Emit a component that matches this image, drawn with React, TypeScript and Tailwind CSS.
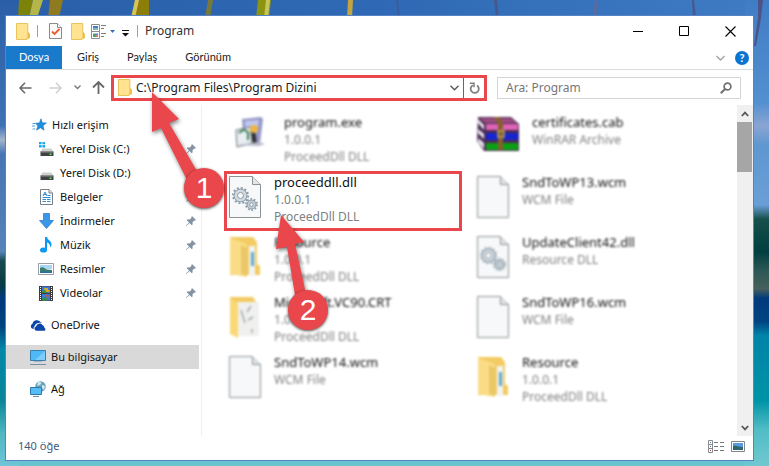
import React from 'react';

type IconName = 'exe' | 'rar' | 'dll' | 'doc' | 'folder' | 'folderDocs';

interface FileEntry {
  name: string;
  lines: string[];
  icon: IconName;
  selected?: boolean;
}

interface PlaceEntry {
  name: string;
  icon: React.ReactNode;
}

const Beach: React.FC = () => (
  <svg className="absolute inset-0 h-full w-full" viewBox="0 0 769 466" preserveAspectRatio="none" aria-hidden="true">
    <defs>
      <linearGradient id="topSky" x1="0" y1="0" x2="1" y2="0">
        <stop offset="0" stopColor="#2a5fa8" />
        <stop offset="0.5" stopColor="#2f69b5" />
        <stop offset="1" stopColor="#3f7cc4" />
      </linearGradient>
      <linearGradient id="leftShore" x1="0" y1="0" x2="0" y2="1">
        <stop offset="0" stopColor="#2a5fa8" />
        <stop offset="0.27" stopColor="#3f72b4" />
        <stop offset="0.3" stopColor="#a3b4cc" />
        <stop offset="0.33" stopColor="#4575b4" />
        <stop offset="0.54" stopColor="#5583b8" />
        <stop offset="0.56" stopColor="#174a50" />
        <stop offset="0.61" stopColor="#083c44" />
        <stop offset="0.64" stopColor="#003a7c" />
        <stop offset="0.7" stopColor="#00447f" />
        <stop offset="0.75" stopColor="#0088a8" />
        <stop offset="0.86" stopColor="#0b8698" />
        <stop offset="0.93" stopColor="#4fb8c0" />
        <stop offset="1" stopColor="#70c4d8" />
      </linearGradient>
      <linearGradient id="rightShore" x1="0" y1="0" x2="0" y2="1">
        <stop offset="0" stopColor="#3f7cc4" />
        <stop offset="0.22" stopColor="#5390d0" />
        <stop offset="0.27" stopColor="#8ba5d2" />
        <stop offset="0.31" stopColor="#5f97d0" />
        <stop offset="0.44" stopColor="#6a9ed6" />
        <stop offset="0.47" stopColor="#17504c" />
        <stop offset="0.54" stopColor="#003f40" />
        <stop offset="0.58" stopColor="#2b5856" />
        <stop offset="0.62" stopColor="#47605c" />
        <stop offset="0.64" stopColor="#003a7c" />
        <stop offset="0.69" stopColor="#004482" />
        <stop offset="0.72" stopColor="#0084a8" />
        <stop offset="0.86" stopColor="#0093a6" />
        <stop offset="0.92" stopColor="#4fbcc4" />
        <stop offset="1" stopColor="#70c8d0" />
      </linearGradient>
    </defs>
    <rect width="769" height="466" fill="#66c4ce" />
    <rect width="769" height="30" fill="url(#topSky)" />
    <rect width="20" height="466" fill="url(#leftShore)" />
    <rect x="745" width="24" height="466" fill="url(#rightShore)" />
    <path d="M19 0h14l-4 18H18z" fill="#7d8208" />
    <path d="M33 0h10l-6 18h-8z" fill="#b5b549" />
    <path d="M50 0h13l-4 18H48z" fill="#8f7a20" />
    <path d="M135 0h14v18h-18z" fill="#8d7e09" />
    <path d="M135 0h4l-4 18h-4z" fill="#d3c45c" />
    <path d="M208 0h5l-3 18h-5z" fill="#76793a" />
    <path d="M258 0h13l-2 18H256z" fill="#8c9410" />
    <path d="M266 0h4l-2 18h-4z" fill="#c7c65c" />
    <path d="M348 0h5l-1 18h-5z" fill="#c2a443" />
    <path d="M396 0h2l2 18h-2z" fill="#3b5c9c" />
    <path d="M494 0h3l2 18h-3z" fill="#47598c" />
    <path d="M595 0h3l-2 18h-3z" fill="#5a6c9c" />
    <path d="M692 0h2l2 18h-3z" fill="#47598c" />
    <path d="M758 0h5l-2 18-5 28h-2l4-28z" fill="#4d5287" />
  </svg>
);

const FolderIcon: React.FC = () => (
  <svg width="14" height="17" viewBox="0 0 14 17" aria-hidden="true">
    <path d="M.5.5h11.3v9.2l1.700 1V15H11v1.500H.5z" fill="#ffe391" stroke="#e9c35c" />
    <path d="M11.500 9.500h1.500v6h-1.500z" fill="#e8bd4c" />
  </svg>
);

const CheckDocIcon: React.FC = () => (
  <svg width="13" height="16" viewBox="0 0 13 16" aria-hidden="true">
    <path d="M.5.5h8l4 4v11H.5z" fill="#fafafa" stroke="#8b8b8b" />
    <path d="M8.500.5v4h4" fill="#fff" stroke="#8b8b8b" />
    <path d="M3 8.500l2.500 2.500 5-5" fill="none" stroke="#ee5a2c" strokeWidth="1.800" />
  </svg>
);

const PropertiesIcon: React.FC = () => (
  <svg width="15" height="15" viewBox="0 0 15 15" aria-hidden="true">
    <path d="M.5.5h8v14h-8zM.5 7.500h8" fill="#fff" stroke="#8d8d8d" />
    <path d="M2 2h5v2H2z" fill="#3b82d4" />
    <path d="M2 4h5v2H2z" fill="#88b7b3" />
    <path d="M2 9.500h3v3.500H2z" fill="#49a35e" />
    <path d="M5 9.500h2v2H5z" fill="#4f7fe0" />
    <path d="M4.500 11.500H7V13H4.500z" fill="#e26b3b" />
    <path d="M10 1.500h5M10 4.500h3M10 9.500h5M10 12.500h3" stroke="#7b7b7b" />
  </svg>
);

const StarIcon: React.FC = () => (
  <svg width="15" height="14" viewBox="0 0 15 14" aria-hidden="true">
    <path d="M9 .8l1.200 4 4.200.2-3.400 2.600 1.100 4.600-3.700-2.500-3.900 2.500 1.400-4.300-2.300-2.700 3.800-.2z" fill="#1d8fe2" stroke="#1c6fb8" strokeWidth=".6" />
    <path d="M.5 5.500h3M0 8h3M.5 11h2.500" stroke="#4aa3e6" />
  </svg>
);

const DiskIcon: React.FC<{ system?: boolean }> = ({ system }) => (
  <svg width="15" height="16" viewBox="0 0 15 16" aria-hidden="true">
    {system && <path d="M0 1h2.600v2.300H0zM3.400 1H6v2.300H3.400zM0 4.100h2.600v2.300H0zM3.400 4.100H6v2.300H3.400z" fill="#19a9f0" />}
    <path d="M3.500 7.500h9l2 3.500H1.500z" fill="#cfcfcf" />
    <path d="M1.500 10.500h13V15h-13z" fill="#3f4245" />
    <path d="M1.500 10.500h13v1h-13z" fill="#8c8f92" />
    <path d="M10.500 12.500h2v1.500h-2z" fill="#55ee55" />
  </svg>
);

const DocumentIcon: React.FC = () => (
  <svg width="13" height="16" viewBox="0 0 13 16" aria-hidden="true">
    <path d="M.5.5h8.500l3.500 3.500v11.500H.5z" fill="#fff" stroke="#7a7f85" />
    <path d="M9 .5V4h3.500" fill="#e5e8ea" stroke="#7a7f85" />
    <path d="M3 7l2-4 2 4M3.500 5.500h3M2.500 8.500h8M7.500 6.500h3M2.500 10.500h3.500M7 10.500h3.500M2.500 12.500h3.500M7 12.500h3.500" fill="none" stroke="#2f8fd6" />
  </svg>
);

const DownloadIcon: React.FC = () => (
  <svg width="15" height="16" viewBox="0 0 15 16" aria-hidden="true">
    <path d="M4.500.5h6v7h4l-7 8-7-8h4z" fill="#3a97e8" stroke="#2a7fd0" strokeWidth=".8" />
  </svg>
);

const MusicIcon: React.FC = () => (
  <svg width="12" height="16" viewBox="0 0 12 16" aria-hidden="true">
    <ellipse cx="3.500" cy="13" rx="3.500" ry="2.600" fill="#0d99f2" />
    <path d="M5 0h2c.3 3 4.800 4 4.500 7.500-.2 1.500-1 2.500-1.500 3 .4-2.500-.5-4-3-5V13H5z" fill="#0d99f2" />
  </svg>
);

const PictureIcon: React.FC = () => (
  <svg width="16" height="12" viewBox="0 0 16 12" aria-hidden="true">
    <path d="M.5.5h15v11H.5z" fill="#fff" stroke="#9a9fa3" />
    <path d="M2 2h12v4H2z" fill="#a8d6f4" />
    <path d="M2 5c3-2 5 1 7 1.500L14 7v3H2z" fill="#3b7d6c" />
    <path d="M2 8.500h12V10H2z" fill="#2c6fa8" />
  </svg>
);

const VideoIcon: React.FC = () => (
  <svg width="14" height="15" viewBox="0 0 14 15" aria-hidden="true">
    <path d="M0 0h14v15H0z" fill="#3c3c3c" />
    <path d="M1.500 1v14M12.500 1v14" stroke="#fff" strokeDasharray="1 1" />
    <path d="M3 .5h8v6.500H3zM3 8h8v6.500H3z" fill="#3d7ad8" />
    <path d="M5 2h4v2h1.500v2H6z" fill="#d8a928" />
    <path d="M3 5l3-1 2 3H3zM3 12.500l4-1.500 2 3.500H3z" fill="#3d8d3e" />
    <path d="M6 9h3.500v2H8z" fill="#e04a2b" />
  </svg>
);

const OneDriveIcon: React.FC = () => (
  <svg width="16" height="11" viewBox="0 0 16 11" aria-hidden="true">
    <path d="M2 8.500A2.600 2.600 0 0 1 2.300 4 4.600 4.600 0 0 1 10.500 2 4 4 0 0 1 12 3C8 2 5 4 4.500 6.500 3.500 7 3.500 8 3.800 9z" fill="#0c47a8" />
    <path d="M6.500 10.800A2.200 2.200 0 0 1 6 6.500 3.700 3.700 0 0 1 12.500 5 3.200 3.200 0 0 1 14.500 8a1.500 1.500 0 0 1 0 2.800z" fill="#0c47a8" />
  </svg>
);

const ComputerIcon: React.FC = () => (
  <svg width="16" height="15" viewBox="0 0 16 15" aria-hidden="true">
    <path d="M.5.5h15v10H.5z" fill="#4fb9f7" stroke="#3a7fae" />
    <path d="M15 1v9L5 10z" fill="#7ccdfb" />
    <path d="M4 11.500h8" stroke="#9fb4c2" />
    <path d="M0 14.500h16" stroke="#7690a3" />
  </svg>
);

const NetworkIcon: React.FC = () => (
  <svg width="16" height="16" viewBox="0 0 16 16" aria-hidden="true">
    <circle cx="10.500" cy="5.500" r="5.300" fill="#6aa3bd" />
    <path d="M8 1.500c2-1 4 0 3 1.500S8 4 7 5zM12 4l3 1-1 4-2-2z" fill="#d6e8ee" />
    <path d="M.5 6.500h11v7H.5z" fill="#56bdf8" stroke="#2d79ab" />
    <path d="M3 15.500h6" stroke="#7690a3" />
  </svg>
);

const PinIcon: React.FC = () => (
  <svg width="10" height="10" viewBox="0 0 10 10" aria-hidden="true">
    <path d="M6 0l4 4-1 .7-.7-.2-1.800 1.800.2 2-1 .9L3.500 7 .4 10 0 9.600 3 6.500.8 4.300l.9-1 2 .2 1.800-1.800L5.300.9z" fill="#8493a3" />
  </svg>
);

const DocShape: React.FC = () => (
  <>
    <path d="M.5.5h23l8 8v33H.5z" fill="#f6f8f9" stroke="#8d9295" />
    <path d="M23.500.5v8h8" fill="#e3e6e8" stroke="#8d9295" />
  </>
);

const fileIcons: Record<IconName, React.ReactNode> = {
  exe: (
    <svg width="42" height="36" viewBox="0 0 42 36" aria-hidden="true">
      <path d="M13 3l19-2 2 2-3 24-16 2z" fill="#9699c8" />
      <path d="M16 5l14-1-2 13-11 2z" fill="#c0c8f0" />
      <path d="M7 14l14-3 2 16-15 4z" fill="#e9eef2" stroke="#6b747e" />
      <path d="M10 17q6-6 9 0v7" fill="none" stroke="#3f7f54" strokeWidth="2" />
      <path d="M24 14l2 14" stroke="#313131" strokeWidth="4" />
      <circle cx="25" cy="13" r="4" fill="#efb643" />
      <path d="M8 29l22-3 6 2-6 2z" fill="#b9bac8" />
    </svg>
  ),
  rar: (
    <svg width="42" height="36" viewBox="0 0 42 36" aria-hidden="true">
      <path d="M1 1h33l8 7v27H7L0 25z" fill="#4a2c54" />
      <path d="M2 2h31l7 5H8z" fill="#9c4b80" />
      <path d="M9 8h32v6H9z" fill="#df63b5" />
      <path d="M9 17h32v7H9z" fill="#1624d0" />
      <path d="M9 27h32v7H9z" fill="#0ba014" />
      <path d="M1 3l6 6v5L1 7zM1 13l6 5v5l-6-6zM1 22l6 5v6l-6-7z" fill="#e8e5ee" />
      <path d="M22 1l4 6v27h-5V8l-4-7z" fill="#86602d" />
      <path d="M21 15h6v6h-6z" fill="none" stroke="#b9a25c" strokeWidth="1.500" />
    </svg>
  ),
  dll: (
    <svg width="32" height="42" viewBox="0 0 32 42" aria-hidden="true">
      <DocShape />
      <g fill="none" stroke="#8b9aa6">
        <circle cx="11.500" cy="19.500" r="7.600" strokeWidth="1.800" strokeDasharray="2 1.980" />
        <circle cx="11.500" cy="19.500" r="6.400" fill="#d3dbe1" />
        <circle cx="11.500" cy="19.500" r="3" fill="#f6f8f9" />
        <circle cx="22.500" cy="28.500" r="5.600" strokeWidth="1.600" strokeDasharray="1.760 1.750" />
        <circle cx="22.500" cy="28.500" r="4.500" fill="#c4ced6" />
        <circle cx="22.500" cy="28.500" r="1.800" fill="#f6f8f9" />
      </g>
    </svg>
  ),
  doc: (
    <svg width="32" height="42" viewBox="0 0 32 42" aria-hidden="true">
      <DocShape />
    </svg>
  ),
  folder: (
    <svg width="32" height="42" viewBox="0 0 32 42" aria-hidden="true">
      <path d="M1 1h23l4 5v22l3 2v9H1z" fill="#f3cb62" />
      <path d="M20 10h6v30h-6z" fill="#f1f4f5" />
      <path d="M22 16h3v14h-3z" fill="#5fa9cf" />
      <path d="M1 2l17 6v33L1 38z" fill="#fbdc86" />
      <path d="M12 9l6 3v28l-6-2z" fill="#eac768" />
    </svg>
  ),
  folderDocs: (
    <svg width="32" height="42" viewBox="0 0 32 42" aria-hidden="true">
      <path d="M1 1h23l3 5v6H1z" fill="#f3cb62" />
      <path d="M8 6h22v34H8z" fill="#f0f0ee" />
      <path d="M12 14l4 13M22 10l-4 6M19 24l5-3M23 33v4" stroke="#a4a9b0" strokeWidth="1.500" />
      <path d="M1 2l8 6v34l-8-4z" fill="#fbd877" />
    </svg>
  ),
};

const places: PlaceEntry[] = [
  { name: 'Yerel Disk (C:)', icon: <DiskIcon system /> },
  { name: 'Yerel Disk (D:)', icon: <DiskIcon /> },
  { name: 'Belgeler', icon: <DocumentIcon /> },
  { name: 'İndirmeler', icon: <DownloadIcon /> },
  { name: 'Müzik', icon: <MusicIcon /> },
  { name: 'Resimler', icon: <PictureIcon /> },
  { name: 'Videolar', icon: <VideoIcon /> },
];

const files: FileEntry[] = [
  { name: 'program.exe', lines: ['1.0.0.1', 'ProceedDll DLL'], icon: 'exe' },
  { name: 'certificates.cab', lines: ['WinRAR Archive'], icon: 'rar' },
  { name: 'proceeddll.dll', lines: ['1.0.0.1', 'ProceedDll DLL'], icon: 'dll', selected: true },
  { name: 'SndToWP13.wcm', lines: ['WCM File'], icon: 'doc' },
  { name: 'Resource', lines: ['1.0.0.1', 'ProceedDll DLL'], icon: 'folder' },
  { name: 'UpdateClient42.dll', lines: ['Resource DLL'], icon: 'dll' },
  { name: 'Microsoft.VC90.CRT', lines: ['1.0.0.1', 'ProceedDll DLL'], icon: 'folderDocs' },
  { name: 'SndToWP16.wcm', lines: ['WCM File'], icon: 'doc' },
  { name: 'SndToWP14.wcm', lines: ['WCM File'], icon: 'doc' },
  { name: 'Resource', lines: ['1.0.0.1', 'ProceedDll DLL'], icon: 'folder' },
];

const TitleBar: React.FC = () => (
  <header className="flex h-[30px] items-center pl-2.5">
    <FolderIcon />
    <span className="ml-[7px] h-3 w-px bg-gray-400" />
    <button type="button" aria-label="Özellikler" className="ml-[11px]"><CheckDocIcon /></button>
    <button type="button" aria-label="Yeni klasör" className="ml-[9px]"><FolderIcon /></button>
    <button type="button" aria-label="Görünüm seçenekleri" className="ml-1.5 flex items-center gap-1">
      <PropertiesIcon />
      <svg width="5" height="3" viewBox="0 0 5 3" aria-hidden="true"><path d="M0 0h5L2.500 3z" fill="#3a6fb5" /></svg>
    </button>
    <button type="button" aria-label="Araç çubuğunu özelleştir" className="ml-[7px] pt-1">
      <svg width="7" height="7" viewBox="0 0 7 7" aria-hidden="true"><path d="M0 0h7v1H0zM0 3h7L3.500 6.500z" fill="#111" /></svg>
    </button>
    <span className="ml-2 h-3 w-px bg-gray-400" />
    <h1 className="ml-[7px] text-xs text-[#333]">Program</h1>
    <div className="ml-auto flex h-full">
      <button type="button" aria-label="Simge durumuna küçült" className="flex w-[46px] items-center justify-center">
        <svg width="11" height="11" viewBox="0 0 11 11"><path d="M0 5.500h10" stroke="#000" /></svg>
      </button>
      <button type="button" aria-label="Ekranı kapla" className="flex w-[46px] items-center justify-center">
        <svg width="11" height="11" viewBox="0 0 11 11"><path d="M.5.5h9v9h-9z" fill="none" stroke="#000" /></svg>
      </button>
      <button type="button" aria-label="Kapat" className="flex w-[46px] items-center justify-center">
        <svg width="11" height="11" viewBox="0 0 11 11"><path d="M.5.5l10 10M10.500.5l-10 10" stroke="#000" strokeWidth="1.100" /></svg>
      </button>
    </div>
  </header>
);

const Ribbon: React.FC = () => (
  <nav className="flex h-6 items-stretch border-b border-[#dadbdc] font-['Lato',sans-serif] text-[11px] text-[#222]">
    <button type="button" className="w-14 bg-[#1979ca] text-white">Dosya</button>
    <button type="button" className="ml-[15px]">Giriş</button>
    <button type="button" className="ml-7">Paylaş</button>
    <button type="button" className="ml-7">Görünüm</button>
    <button type="button" aria-label="Şeridi genişlet" className="ml-auto flex items-center">
      <svg width="9" height="6" viewBox="0 0 9 6"><path d="M.5 1l4 4 4-4" fill="none" stroke="#a0a0a0" strokeWidth="1.300" /></svg>
    </button>
    <button type="button" aria-label="Yardım" className="mr-1 ml-2.5 flex items-center">
      <span className="flex size-[14px] items-center justify-center rounded-full bg-[#0a74d1] leading-3 font-bold text-white">?</span>
    </button>
  </nav>
);

const AddressRow: React.FC = () => (
  <div className="flex h-[35px] items-center pr-3 pl-[13px] text-xs">
    <button type="button" aria-label="Geri">
      <svg width="13" height="12" viewBox="0 0 13 12"><path d="M6 .8L1 6l5 5.200M1 6h11.500" fill="none" stroke="#686868" strokeWidth="1.600" /></svg>
    </button>
    <button type="button" aria-label="İleri" className="ml-[17px]">
      <svg width="13" height="12" viewBox="0 0 13 12"><path d="M7 .8L12 6l-5 5.200M12 6H.5" fill="none" stroke="#cfcfcf" strokeWidth="1.400" /></svg>
    </button>
    <button type="button" aria-label="Son konumlar" className="ml-3">
      <svg width="7" height="5" viewBox="0 0 7 5"><path d="M.5.5l3 3 3-3" fill="none" stroke="#777" strokeWidth="1.400" /></svg>
    </button>
    <button type="button" aria-label="Yukarı" className="ml-[11px]">
      <svg width="13" height="13" viewBox="0 0 13 13"><path d="M1 6.500l5.500-5.500L12 6.500M6.500 1v12" fill="none" stroke="#686868" strokeWidth="1.800" /></svg>
    </button>
    <div className="ml-1.5 flex h-[26px] min-w-0 flex-1 items-center border-3 border-[#e9474b] pl-1">
      <FolderIcon />
      <input
        type="text"
        aria-label="Adres"
        defaultValue="C:\Program Files\Program Dizini"
        className="ml-1 h-5 min-w-0 flex-1 text-[#222] outline-none"
      />
      <button type="button" aria-label="Önceki konumlar" className="mr-1">
        <svg width="9" height="6" viewBox="0 0 9 6"><path d="M.5.8l4 4 4-4" fill="none" stroke="#555" strokeWidth="1.300" /></svg>
      </button>
      <button type="button" aria-label="Yenile" className="flex h-5 w-[21px] items-center justify-center border-l border-[#1979ca]">
        <svg width="11" height="12" viewBox="0 0 11 12">
          <path d="M3.800 3.200A4.100 4.100 0 1 0 8 3.400" fill="none" stroke="#808080" strokeWidth="1.800" />
          <path d="M.8 1.300h4.200v4" fill="none" stroke="#808080" strokeWidth="1.500" />
        </svg>
      </button>
    </div>
    <div className="ml-2.5 flex h-[22px] w-[244px] shrink-0 items-center border border-[#d5d5d5] px-2">
      <input
        type="search"
        aria-label="Ara"
        placeholder="Ara: Program"
        className="h-5 min-w-0 flex-1 outline-none placeholder:text-[#777]"
      />
      <svg width="12" height="12" viewBox="0 0 12 12" aria-hidden="true">
        <circle cx="7.500" cy="4.500" r="3.400" fill="none" stroke="#707070" strokeWidth="1.700" />
        <path d="M5 7L.8 11.200" stroke="#707070" strokeWidth="2" />
      </svg>
    </div>
  </div>
);

const Sidebar: React.FC = () => (
  <aside className="w-[196px] shrink-0 border-r border-[#f0f0f0] pt-2 pr-0.5 text-[11px] text-[#111]">
    <a href="#hizli" className="flex h-6 items-center gap-[5px] pl-[26px]">
      <StarIcon />
      Hızlı erişim
    </a>
    <ul>
      {places.map((place) => (
        <li key={place.name}>
          <a href="#konum" className="flex h-6 items-center pr-[3px] pl-8">
            <span className="flex w-4 justify-center">{place.icon}</span>
            <span className="ml-1.5 flex-1">{place.name}</span>
            <PinIcon />
          </a>
        </li>
      ))}
    </ul>
    <a href="#onedrive" className="mt-2 flex h-6 items-center gap-[5px] pl-6">
      <OneDriveIcon />
      OneDrive
    </a>
    <a href="#bilgisayar" className="mt-2 flex h-6 items-center gap-[5px] bg-[#d9d9d9] pl-6">
      <ComputerIcon />
      Bu bilgisayar
    </a>
    <a href="#ag" className="mt-2 flex h-6 items-center gap-[5px] pl-6">
      <NetworkIcon />
      Ağ
    </a>
  </aside>
);

const FileItem: React.FC<{ file: FileEntry }> = ({ file }) => (
  <li className={`flex h-[60px] gap-[13px] border-3 pl-0.5 ${file.selected ? 'border-[#e9474b]' : 'border-transparent blur-[1px]'}`}>
    <span className="shrink-0 pt-0.5">{fileIcons[file.icon]}</span>
    <div className="whitespace-nowrap">
      <p className="text-[13px] leading-[17px] text-[#111]">{file.name}</p>
      {file.lines.map((line) => (
        <p key={line} className="text-xs leading-[17px] text-[#808080]">{line}</p>
      ))}
    </div>
  </li>
);

const Scrollbar: React.FC = () => (
  <div className="flex w-4 shrink-0 flex-col items-center bg-[#f0f0f0]">
    <button type="button" aria-label="Yukarı kaydır" className="flex h-[17px] items-center">
      <svg width="8" height="6" viewBox="0 0 8 6"><path d="M.8 5L4 1.600 7.200 5" fill="none" stroke="#555" strokeWidth="1.800" /></svg>
    </button>
    <div className="h-[50px] w-[15px] self-start bg-[#a6a6a6]" />
    <button type="button" aria-label="Aşağı kaydır" className="mt-auto flex h-4 items-center">
      <svg width="8" height="6" viewBox="0 0 8 6"><path d="M.8 1L4 4.400 7.200 1" fill="none" stroke="#555" strokeWidth="1.800" /></svg>
    </button>
  </div>
);

const StatusBar: React.FC = () => (
  <footer className="flex h-6 items-center pr-2 pb-1 pl-3 text-[11px] text-[#43587c]">
    140 öğe
    <button type="button" aria-label="Ayrıntılar" className="mr-[7px] ml-auto">
      <svg width="16" height="13" viewBox="0 0 16 13">
        <path d="M.5.5h4v12h-4zM.5 4.500h4M.5 8.500h4" fill="#fff" stroke="#8a8a8a" />
        <path d="M2 2h1v1H2zM2 6h1v1H2z" fill="#4477aa" />
        <path d="M2 10h1v1H2z" fill="#cc3333" />
        <path d="M6 2.500h4M12 2.500h4M6 6.500h4M12 6.500h4M6 10.500h4M12 10.500h4" stroke="#777" />
      </svg>
    </button>
    <button type="button" aria-label="Büyük simgeler">
      <svg width="14" height="11" viewBox="0 0 14 11">
        <path d="M.5.5h13v10H.5z" fill="#fff" stroke="#868686" />
        <path d="M2 2h10v4H2z" fill="#5a9ae0" />
        <path d="M2 5c4-1 5 1 10 1v3H2z" fill="#2e6670" />
      </svg>
    </button>
  </footer>
);

// Arrow with a numbered badge; the two share badge size and shadow
const Callout: React.FC<{ label: string; arrow: string; size: string }> = ({ label, arrow, size }) => (
  <div className={`pointer-events-none absolute ${size}`}>
    <svg className="h-full w-full overflow-visible drop-shadow-[1px_2px_2px_rgba(0,0,0,0.5)]" aria-hidden="true">
      <path d={arrow} fill="#e9474b" />
    </svg>
    <span className="absolute right-0 bottom-0 flex size-10 items-center justify-center rounded-full bg-[#e9474b] font-['Liberation_Sans',sans-serif] text-[30px] leading-none text-white shadow-[0_1px_3px_rgba(0,0,0,0.7)]">
      {label}
    </span>
  </div>
);

const App: React.FC = () => (
  <div className="relative flex min-h-screen flex-col overflow-hidden bg-[#2f69b5] pt-[15px] pr-[15px] pb-[5px] pl-[5px] font-['Noto_Sans',sans-serif]">
    <Beach />
    <main className="relative flex flex-1 flex-col border border-[#5583c6] bg-white">
      <TitleBar />
      <Ribbon />
      <AddressRow />
      <div className="flex flex-1">
        <Sidebar />
        <ul className="grid flex-1 grid-cols-2 content-start gap-x-2.5 pt-1.5 pr-[27px] pl-[22px]">
          {files.map((file, index) => (
            <FileItem key={index} file={file} />
          ))}
        </ul>
        <Scrollbar />
      </div>
      <StatusBar />
      <Callout
        label="1"
        arrow="M1 0L28 27L18 31L50 86L38 92L10 36L1 40Z"
        size="top-[76px] left-[145px] h-[116px] w-[73px]"
      />
      <Callout
        label="2"
        arrow="M6 0L29 27L20 29L33 88L22 92L12 32L1 34Z"
        size="top-[199px] left-[269px] h-[115px] w-[53px]"
      />
    </main>
  </div>
);

export default App;
